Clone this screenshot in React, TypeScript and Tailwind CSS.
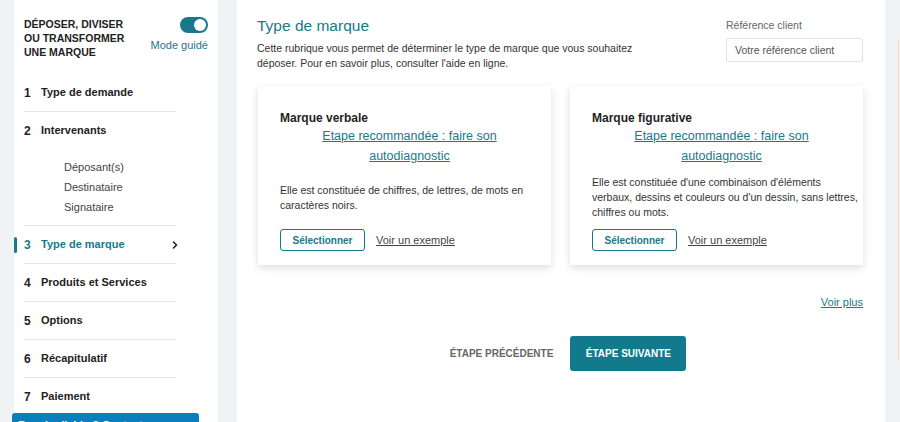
import { ChevronRight } from "lucide-react";

const teal = "text-[#17798a]";

interface Step {
    num: number;
    label: string;
    active?: boolean;
    children?: string[];
}

const steps: Step[] = [
    { num: 1, label: "Type de demande" },
    { num: 2, label: "Intervenants", children: ["Déposant(s)", "Destinataire", "Signataire"] },
    { num: 3, label: "Type de marque", active: true },
    { num: 4, label: "Produits et Services" },
    { num: 5, label: "Options" },
    { num: 6, label: "Récapitulatif" },
    { num: 7, label: "Paiement" },
];

const Sidebar = () => {
    return (
        <aside className="relative w-[204px] shrink-0 bg-white">
            <div className="flex justify-between pl-[10px] pr-[10px] pt-[17px]">
                <h2 className="text-[10.5px] font-bold uppercase leading-[14px] text-[#222]">
                    Déposer, diviser
                    <br />
                    ou transformer
                    <br />
                    une marque
                </h2>
                <div className="flex flex-col items-end">
                    <div className="flex h-[16px] w-[28px] items-center justify-end rounded-full bg-[#17798a] pr-[2px]">
                        <div className="h-[12px] w-[12px] rounded-full bg-white" />
                    </div>
                    <span className={`mt-[4px] text-[11px] ${teal}`}>Mode guidé</span>
                </div>
            </div>

            <ul className="mt-[15px] w-[162px] pl-[10px]">
                {steps.map((step) => (
                    <li key={step.num} className="relative border-b border-[#e4e5e8] last:border-b-0">
                        {step.active && (
                            <span className="absolute -left-[10px] top-[11px] h-[16px] w-[3px] rounded-sm bg-[#17798a]" />
                        )}
                        <div className="flex h-[37px] items-center">
                            <span
                                className={`w-[17px] text-[12px] font-bold ${
                                    step.active ? teal : "text-[#222]"
                                }`}
                            >
                                {step.num}
                            </span>
                            <span
                                className={`flex-1 text-[11px] font-bold ${
                                    step.active ? teal : "text-[#222]"
                                }`}
                            >
                                {step.label}
                            </span>
                            {step.active && (
                                <ChevronRight className="mr-[-5px] h-[12px] w-[12px] text-[#222]" strokeWidth={3.2} />
                            )}
                        </div>
                        {step.children && (
                            <ul className="pb-[8px] pl-[40px] pt-[8px]">
                                {step.children.map((child) => (
                                    <li key={child} className="flex h-[20px] items-center text-[11px] text-[#444]">
                                        {child}
                                    </li>
                                ))}
                            </ul>
                        )}
                    </li>
                ))}
            </ul>

            <div className="absolute left-[-2px] top-[413px] h-[20px] w-[187px] rounded-t-[3px] bg-[#0b7fbd] px-[6px] pt-[4px] text-[11px] font-bold text-white">
                Besoin d&apos;aide ? Contactez nos conseillers
            </div>
        </aside>
    );
};

interface MarkCardProps {
    title: string;
    lines: string[];
}

const MarkCard = ({ title, lines }: MarkCardProps) => {
    return (
        <div className="flex h-[179px] w-[293px] flex-col bg-white pb-[14px] pl-[22px] pr-[8px] pt-[24px] shadow-[0_3px_8px_rgba(0,0,0,0.13)]">
            <h3 className="text-[12px] font-bold leading-[16px] text-[#1f1f1f]">{title}</h3>
            <a
                href="#"
                className={`block pr-[4px] text-center text-[12.5px] leading-[20px] underline ${teal}`}
            >
                Etape recommandée : faire son
                <br />
                autodiagnostic
            </a>
            <div className="flex flex-1 items-center">
                <p className="whitespace-nowrap text-[10.5px] leading-[15px] text-[#333]">
                    {lines.map((line, i) => (
                        <span key={i} className="block">
                            {line}
                        </span>
                    ))}
                </p>
            </div>
            <div className="flex items-center gap-[11px]">
                <button
                    type="button"
                    className={`h-[22px] w-[85px] rounded-[3px] border border-[#17798a] text-[10px] font-bold ${teal}`}
                >
                    Sélectionner
                </button>
                <a href="#" className="text-[11px] text-[#444] underline">
                    Voir un exemple
                </a>
            </div>
        </div>
    );
};

export default function App() {
    return (
        <div
            className="flex h-[422px] w-[900px] overflow-hidden bg-[#f1f2f4] pl-[14px]"
            style={{ fontFamily: '"Liberation Sans", Arial, sans-serif' }}
        >
            <Sidebar />

            <main className="ml-[19px] flex w-[648px] shrink-0 flex-col bg-white pl-[20px] pr-[22px]">
                <div className="flex justify-between pt-[16px]">
                    <div>
                        <h1 className={`text-[15.5px] leading-[20px] ${teal}`}>Type de marque</h1>
                        <p className="mt-[5px] w-[385px] text-[10.5px] leading-[15px] text-[#333]">
                            Cette rubrique vous permet de déterminer le type de marque que vous souhaitez
                            déposer. Pour en savoir plus, consulter l&apos;aide en ligne.
                        </p>
                    </div>
                    <div className="flex flex-col pt-[2px]">
                        <label className="text-[10.5px] text-[#666]">Référence client</label>
                        <input
                            type="text"
                            placeholder="Votre référence client"
                            className="mt-[4px] h-[24px] w-[137px] rounded-[2px] border border-[#e1e2e5] px-[8px] text-[10.5px] text-[#333] placeholder:text-[#555] outline-none"
                        />
                    </div>
                </div>

                <div className="ml-[1px] mt-[15px] flex gap-[19px]">
                    <MarkCard
                        title="Marque verbale"
                        lines={[
                            "Elle est constituée de chiffres, de lettres, de mots en",
                            "caractères noirs.",
                        ]}
                    />
                    <MarkCard
                        title="Marque figurative"
                        lines={[
                            "Elle est constituée d'une combinaison d'éléments",
                            "verbaux, dessins et couleurs ou d'un dessin, sans lettres,",
                            "chiffres ou mots.",
                        ]}
                    />
                </div>

                <div className="mt-[29px] flex justify-end">
                    <a href="#" className={`text-[11px] underline ${teal}`}>
                        Voir plus
                    </a>
                </div>

                <div className="mt-[25px] flex items-center justify-center gap-[17px] pl-[16px]">
                    <button type="button" className="text-[10px] font-bold uppercase text-[#666]">
                        Étape précédente
                    </button>
                    <button
                        type="button"
                        className="h-[35px] w-[116px] rounded-[3px] bg-[#137a8d] text-[10px] font-bold uppercase text-white"
                    >
                        Étape suivante
                    </button>
                </div>
            </main>

            <div className="flex flex-1 justify-end pr-[1px] pt-[40px]">
                <div className="h-[320px] w-px bg-[#f3dccd]" />
            </div>
        </div>
    );
}
